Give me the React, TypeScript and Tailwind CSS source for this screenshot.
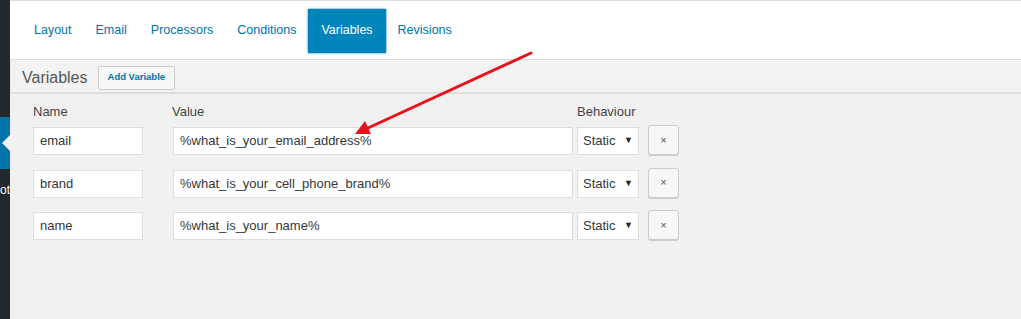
import React from 'react'

const tabs = ['Layout', 'Email', 'Processors', 'Conditions', 'Variables', 'Revisions']

const rows = [
  { name: 'email', value: '%what_is_your_email_address%' },
  { name: 'brand', value: '%what_is_your_cell_phone_brand%' },
  { name: 'name', value: '%what_is_your_name%' },
]

function VariableRow({ name, value }: { name: string; value: string }) {
  return (
    <div className="flex items-center h-[28px]">
      <div className="w-[110px] h-[28px] bg-white border border-[#ddd] pl-[6px] flex items-center text-[13px] text-[#32373c]">
        {name}
      </div>
      <div className="ml-[30px] w-[400px] h-[28px] bg-white border border-[#ddd] pl-[6px] flex items-center text-[13px] text-[#32373c]">
        {value}
      </div>
      <div className="ml-[4px] w-[62px] h-[28px] bg-white border border-[#ddd] pl-[5px] pr-[5px] flex items-center justify-between text-[13px] text-[#32373c]">
        <span>Static</span>
        <span className="text-[9px] text-[#222]">▼</span>
      </div>
      <button className="ml-[9px] w-[31px] h-[30px] -mt-[2px] bg-[#f7f7f7] border border-[#ccc] rounded-[3px] shadow-[0_1px_0_#ccc] flex items-center justify-center text-[11px] text-[#555]">
        ×
      </button>
    </div>
  )
}

export default function App() {
  return (
    <div
      className="relative w-[1021px] h-[319px] flex overflow-hidden bg-[#f1f1f1]"
      style={{ fontFamily: '"Liberation Sans", Arial, sans-serif' }}
    >
      {/* admin sidebar edge */}
      <div className="w-[10px] shrink-0 bg-[#23282d] flex flex-col">
        <div className="h-[117px]" />
        <div className="relative h-[52px] bg-[#0073aa]">
          <div className="absolute right-0 top-[18px] w-0 h-0 border-y-[8px] border-y-transparent border-r-[8px] border-r-[#f1f1f1]" />
        </div>
        <div className="h-[12px]" />
        <div className="flex justify-end text-[12px] leading-[18px] text-white whitespace-nowrap">
          ot
        </div>
      </div>

      <div className="flex-1 flex flex-col">
        {/* tab bar */}
        <div className="h-[60px] bg-white border-t border-b border-[#ddd] flex items-center pl-[12px] pt-[1px]">
          {tabs.map((t) =>
            t === 'Variables' ? (
              <div
                key={t}
                className="h-[44px] px-[13px] flex items-center bg-[#0085ba] text-white text-[12.5px] shadow-[0_0_2px_#0073aa]"
              >
                {t}
              </div>
            ) : (
              <div key={t} className="h-[44px] px-[12px] flex items-center text-[12.5px] text-[#0073aa]">
                {t}
              </div>
            )
          )}
        </div>

        {/* section header */}
        <div className="h-[34px] bg-[#f3f3f3] border-b-2 border-[#ddd] border-l border-l-[#e5e5e5] flex items-center pl-[11px] gap-[10px] pt-[3px]">
          <span className="text-[16px] text-[#555]">Variables</span>
          <button className="h-[24px] px-[9px] border border-[#ccc] bg-[#f7f7f7] rounded-[2px] text-[9.5px] font-bold text-[#0073aa]">
            Add Variable
          </button>
        </div>

        {/* variables list */}
        <div className="pl-[23px] pt-[9px] flex flex-col">
          <div className="flex text-[13px] text-[#444] h-[18px] items-center">
            <span className="w-[139px]">Name</span>
            <span className="w-[405px]">Value</span>
            <span>Behaviour</span>
          </div>
          <div className="mt-[6px] flex flex-col gap-[14.5px]">
            {rows.map((r) => (
              <VariableRow key={r.name} name={r.name} value={r.value} />
            ))}
          </div>
        </div>
      </div>

      {/* annotation arrow */}
      <svg className="absolute left-0 top-0 pointer-events-none" width="1021" height="319">
        <line x1="531" y1="53" x2="368" y2="128" stroke="#e8121a" strokeWidth="3" strokeLinecap="round" />
        <polygon points="355,134 365,121 371,134" fill="#e8121a" />
      </svg>
    </div>
  )
}
